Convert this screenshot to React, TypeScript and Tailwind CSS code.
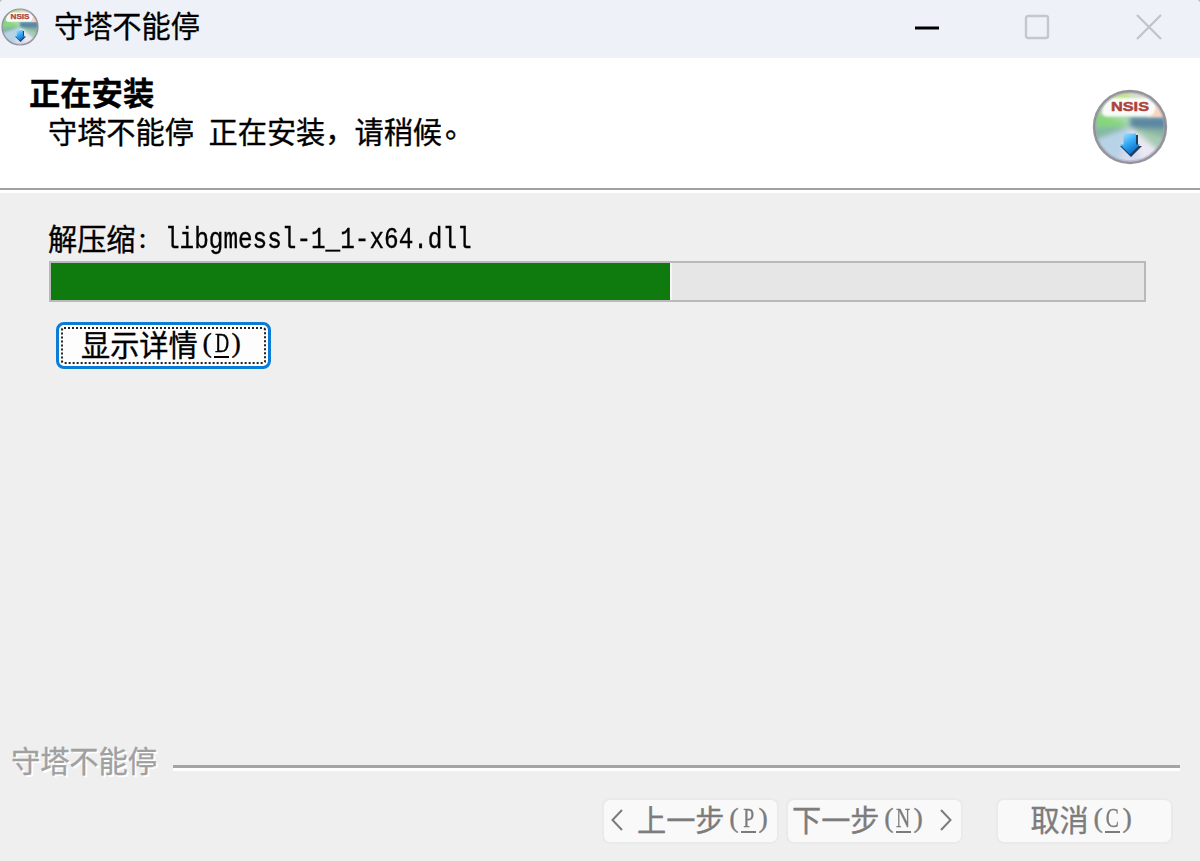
import { clsx } from "clsx";
import type { ReactNode } from "react";

const APP_NAME = "守塔不能停";
const FILE_NAME = "libgmessl-1_1-x64.dll";
const PROGRESS = 56.85;

function DiscIcon({ size, id, className }: { size: number; id: string; className?: string }) {
  return (
    <svg width={size} height={size} viewBox="0 0 76 76" className={clsx("shrink-0", className)}>
      <defs>
        <clipPath id={`${id}-clip`}>
          <circle cx="38" cy="38" r="35.5" />
        </clipPath>
        <linearGradient id={`${id}-base`} x1="0" y1="0" x2="1" y2="1">
          <stop offset="0" stopColor="#b9bfae" />
          <stop offset="0.35" stopColor="#a8dca6" />
          <stop offset="0.6" stopColor="#b9d5dc" />
          <stop offset="1" stopColor="#b7a9cb" />
        </linearGradient>
        <linearGradient id={`${id}-arrow`} x1="0" y1="0" x2="0.6" y2="1">
          <stop offset="0" stopColor="#b5e6ff" />
          <stop offset="0.5" stopColor="#35acf8" />
          <stop offset="1" stopColor="#0867c8" />
        </linearGradient>
        <filter id={`${id}-soft`} x="-30%" y="-30%" width="160%" height="160%">
          <feGaussianBlur stdDeviation="2.6" />
        </filter>
        <filter id={`${id}-glow`} x="-20%" y="-20%" width="140%" height="140%">
          <feGaussianBlur stdDeviation="0.9" />
        </filter>
      </defs>
      <g clipPath={`url(#${id}-clip)`}>
        <circle cx="38" cy="38" r="37" fill={`url(#${id}-base)`} />
        <g filter={`url(#${id}-soft)`}>
          <path d="M40 36L-2 22L-2 40Z" fill="#86d67c" />
          <path d="M38 38L-2 38L2 54Z" fill="#84b8a4" />
          <path d="M38 38L0 52L24 80Z" fill="#b9d3e6" />
          <path d="M38 38L24 80L52 80Z" fill="#d3dcee" />
          <path d="M38 38L52 80L72 66Z" fill="#eae8f2" />
          <path d="M38 38L72 66L80 50Z" fill="#a6ccb4" />
          <path d="M38 38L80 52L80 38Z" fill="#8ab5a0" />
          <path d="M38 39L80 40L80 28L38 28Z" fill="#5b87a2" />
          <path d="M38 0L14 6L24 16L38 14Z" fill="#c2e693" />
          <path d="M38 0L38 12L56 14L60 4Z" fill="#d9dccf" />
        </g>
        <path d="M54 28H76V20L66 12Z" fill="#f7d5bf" filter={`url(#${id}-glow)`} />
        <path
          d="M11 18Q13 11 20 9H56Q62 11 64 17L62 24Q60 27 53 27.5H17Q10 28 10 23Z"
          fill="#fff"
          opacity="0.9"
          filter={`url(#${id}-glow)`}
        />
      </g>
      <circle cx="38" cy="38" r="36" fill="none" stroke="#77727c" strokeWidth="2.4" opacity="0.75" />
      <circle cx="38" cy="38" r="34.2" fill="none" stroke="#a5a3b4" strokeWidth="2" opacity="0.5" />
      <text
        x="38"
        y="22"
        textAnchor="middle"
        textLength="38"
        lengthAdjust="spacingAndGlyphs"
        fontFamily="Liberation Sans, sans-serif"
        fontWeight="700"
        fontSize="13"
        fill="#a8403c"
        stroke="#b5443e"
        strokeWidth="0.5"
      >
        NSIS
      </text>
      <path d="M33 46H46V57H50L39 68L28 57H33Z" fill="#1b3f5e" />
      <path d="M31.5 44.5H44V55.5H48L38 65.5L28 55.5H31.5Z" fill={`url(#${id}-arrow)`} />
    </svg>
  );
}

// Half-width cell, as in a fixed-pitch CJK font
function Half({ children, narrow, underline }: { children: ReactNode; narrow?: boolean; underline?: boolean }) {
  return (
    <span
      className={clsx(
        "inline-flex h-[30px] w-[14.6px] justify-center font-['Liberation_Serif',serif] text-[28px] leading-[30px]",
        underline && "border-b-2 border-current"
      )}
    >
      <span className={clsx("inline-block", narrow && "scale-x-[0.7]")}>{children}</span>
    </span>
  );
}

function Accel({ letter }: { letter: string }) {
  return (
    <span className="ml-0.5 flex">
      <Half>(</Half>
      <Half narrow underline>
        {letter}
      </Half>
      <Half>)</Half>
    </span>
  );
}

function Chevron({ dir }: { dir: "left" | "right" }) {
  return (
    <svg width="14" height="24" viewBox="0 0 14 24" fill="none" stroke="currentColor" strokeWidth="2">
      <path d={dir === "left" ? "M12 2L2.5 12L12 22" : "M2 2L11.5 12L2 22"} />
    </svg>
  );
}

function NavButton({ children, className }: { children: ReactNode; className?: string }) {
  return (
    <button
      disabled
      className={clsx(
        "flex h-[46px] items-center rounded-lg border-2 border-[#eaeaea] bg-[#f9f9f9] pb-0.5 text-[#7c7c7c]",
        className
      )}
    >
      {children}
    </button>
  );
}

export default function App() {
  return (
    <div className="h-[861px] w-[1200px] bg-[#b5b8bd]">
      <div className="flex h-full flex-col overflow-hidden rounded-t-[4px] bg-[#efefef] font-['Noto_Sans_CJK_SC',sans-serif] text-[29.2px] leading-[30px] text-black [-webkit-text-stroke:0.35px_currentColor]">
        <header className="flex h-[58px] shrink-0 items-start bg-[#eef2f8]">
          <DiscIcon size={38} id="small" className="mt-2 ml-px" />
          <h1 className="mt-[9px] ml-[15px]">{APP_NAME}</h1>
          <div className="mt-3.5 mr-[38px] ml-auto flex">
            <svg width="26" height="26" viewBox="0 0 26 26">
              <path d="M1 14H25" stroke="#000" strokeWidth="3" />
            </svg>
            <svg width="26" height="26" viewBox="0 0 26 26" className="ml-[84px]">
              <rect x="2" y="2" width="22" height="22" rx="2" fill="none" stroke="#c4c7cb" strokeWidth="2.4" />
            </svg>
            <svg width="26" height="26" viewBox="0 0 26 26" className="ml-[86px]">
              <path d="M1 1L25 25M25 1L1 25" stroke="#c0c3c7" strokeWidth="2.2" />
            </svg>
          </div>
        </header>

        <section className="flex h-[130px] shrink-0 items-start justify-between bg-white pr-[32px] pl-[29px]">
          <div className="pt-[18px]">
            <h2 className="text-[31.3px] leading-[32px] font-bold">正在安装</h2>
            <p className="mt-[7px] flex pl-[19px]">
              <span>{APP_NAME}</span>
              <span className="ml-[14.6px]">正在安装</span>
              <span className="relative -top-0.5">，</span>
              <span>请稍候</span>
              <span className="relative -top-1.5 left-[3px]">。</span>
            </p>
          </div>
          <DiscIcon size={76} id="large" className="mt-[31px]" />
        </section>
        <div className="h-[5px] shrink-0 border-t-2 border-b-[3px] border-t-[#a0a0a0] border-b-white" />

        <main className="flex grow flex-col items-start pt-[29px] pl-[48px]">
          <p className="flex h-[30px]">
            <span>解压缩</span>
            <span className="w-[29.2px] pl-[3px] font-['Liberation_Serif',serif] leading-[32px]">:</span>
            <span className="inline-block origin-left scale-x-[0.8111] pt-[3px] font-['Liberation_Mono',monospace] text-[30px] leading-[30px]">
              {FILE_NAME}
            </span>
          </p>
          <div className="mt-[9px] ml-px h-[41px] w-[1097px] border-2 border-[#b9b9b9] bg-[#e6e6e6]">
            <div className="h-full border-r-2 border-[#f6f6f6] bg-[#0f7b0f]" style={{ width: `${PROGRESS}%` }} />
          </div>
          <button className="mt-5 ml-2 flex h-[47px] w-[215px] rounded-lg border-[3px] border-[#0a7bd6] bg-[#fdfdfd] p-0.5">
            <span className="flex h-full w-full items-center rounded-[3px] border-2 border-dotted border-[#222] pb-1.5 pl-[18px]">
              显示详情
              <Accel letter="D" />
            </span>
          </button>
        </main>

        <footer className="shrink-0 pb-[17px]">
          <div className="flex h-[38px] items-start pr-5 pl-[11px]">
            <span className="mt-px text-[#a0a0a0] [text-shadow:2px_2px_0_#fff]">{APP_NAME}</span>
            <span className="mt-[22px] ml-4 h-[6px] grow border-t-[3px] border-b-[3px] border-t-[#a5a5a5] border-b-white" />
          </div>
          <div className="mt-[17px] flex justify-end pr-[27px]">
            <NavButton className="w-[177px] gap-[13px] pl-1.5">
              <Chevron dir="left" />
              <span className="-mt-1 flex">
                上一步
                <Accel letter="P" />
              </span>
            </NavButton>
            <NavButton className="ml-[7px] w-[177px] gap-[14px] pl-1">
              <span className="-mt-1 flex">
                下一步
                <Accel letter="N" />
              </span>
              <Chevron dir="right" />
            </NavButton>
            <NavButton className="ml-[33px] w-[177px] justify-center pr-1">
              <span className="-mt-1 flex">
                取消
                <Accel letter="C" />
              </span>
            </NavButton>
          </div>
        </footer>
      </div>
    </div>
  );
}
